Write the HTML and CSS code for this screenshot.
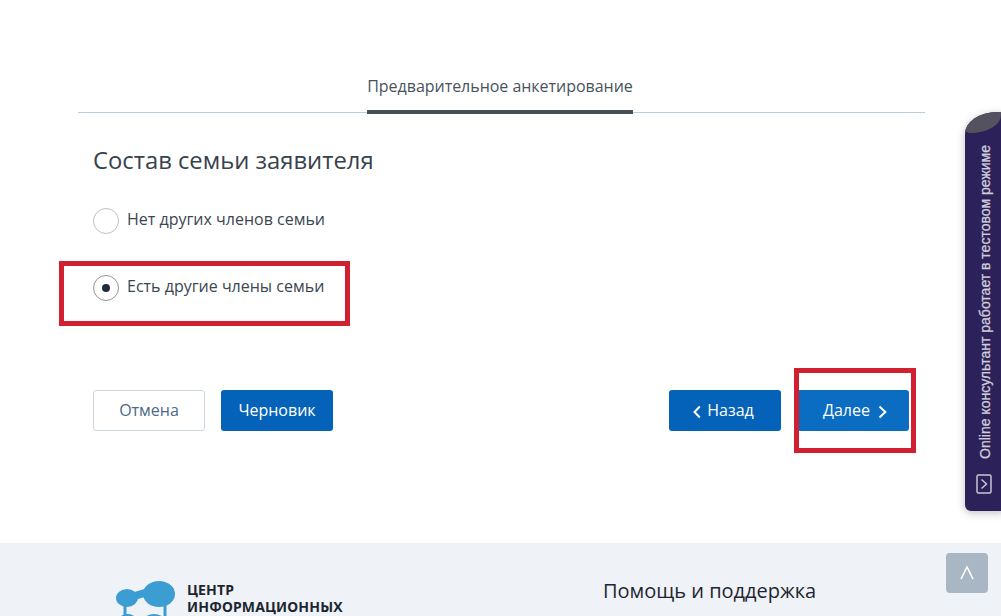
FILE: index.html
```html
<!DOCTYPE html>
<html lang="ru">
<head>
    <meta charset="UTF-8">
    <title>Состав семьи заявителя</title>
    <link rel="stylesheet" href="styles.css">
</head>
<body>
    <main class="content">
        <div class="tabs">
            <div class="tab">Предварительное анкетирование</div>
        </div>

        <div class="form">
            <h2 class="form-title">Состав семьи заявителя</h2>

            <div class="radio-row first">
                <span class="radio"></span>
                <span class="radio-label">Нет других членов семьи</span>
            </div>
            <div class="radio-row second">
                <span class="radio checked"></span>
                <span class="radio-label">Есть другие члены семьи</span>
                <span class="mark mark-radio"></span>
            </div>

            <div class="buttons">
                <div class="btn-group">
                    <div class="btn btn-light">Отмена</div>
                    <div class="btn btn-blue medium">Черновик</div>
                </div>
                <div class="btn-group">
                    <div class="btn btn-blue btn-back">
                        <svg class="chev" width="8" height="14" viewBox="0 0 8 14"><path d="M6.800 1.500 1.500 7l5.300 5.500" fill="none" stroke="#fff" stroke-width="2"/></svg>
                        Назад
                    </div>
                    <div class="btn btn-next">
                        Далее
                        <svg class="chev" width="9" height="14" viewBox="0 0 9 14"><path d="M1.500 1.500 7.300 7l-5.800 5.500" fill="none" stroke="#fff" stroke-width="2"/></svg>
                        <span class="mark mark-next"></span>
                    </div>
                </div>
            </div>
        </div>
    </main>

    <footer class="footer">
        <div class="footer-logo">
            <svg class="logo-icon" width="60" height="37" viewBox="0 0 60 37">
                <path d="M14 16 30 11v5l-16 5M9 26v11M49 26v11" stroke="#3b9dd2" stroke-width="3" fill="#3b9dd2"/>
                <ellipse cx="11" cy="19" rx="11" ry="9" fill="#3b9dd2"/>
                <ellipse cx="43" cy="15" rx="16" ry="13" fill="#3b9dd2"/>
                <ellipse cx="11.500" cy="40" rx="8" ry="5" fill="#3b9dd2"/>
                <ellipse cx="38" cy="41" rx="10" ry="6" fill="#3b9dd2"/>
            </svg>
            <div class="logo-text">ЦЕНТР<br>ИНФОРМАЦИОННЫХ</div>
        </div>
        <div class="footer-help">Помощь и поддержка</div>
    </footer>

    <aside class="consultant">
        <span class="consultant-text">Online консультант работает в тестовом режиме</span>
        <svg class="consultant-icon" width="16" height="20" viewBox="0 0 16 20"><rect x="1" y="1" width="14" height="18" rx="1.500" fill="none" stroke="#c9c6d6" stroke-width="1.500"/><path d="M5.500 5.500 10.500 10l-5 4.500" fill="none" stroke="#c9c6d6" stroke-width="1.500"/></svg>
    </aside>

    <div class="to-top">
        <svg width="14" height="14" viewBox="0 0 14 14"><path d="M1 13 7 1l6 12" fill="none" stroke="#fff" stroke-width="1.600"/></svg>
    </div>
</body>
</html>
```

FILE: styles.css
```css
html, body {
    margin: 0;
    height: 616px;
    overflow: hidden;
    background: #fff;
    font-family: "Open Sans", Arial, sans-serif;
    color: #3c4650;
}

.content {
    padding: 73px 76px 0 78px;
    height: 470px;
}

/* tabs */
.tabs {
    display: flex;
    justify-content: center;
    height: 39px;
    border-bottom: 1px solid #bccbd8;
    padding-right: 3px;
}
.tab {
    height: 37px;
    border-bottom: 4px solid #454f58;
    font-size: 16px;
    line-height: 26px;
    letter-spacing: -0.03px;
    color: #48525b;
}

/* form */
.form {
    padding: 0 16px 0 15px;
}
.form-title {
    margin: 31px 0 0;
    font-size: 23.800px;
    line-height: 32px;
    font-weight: 400;
    color: #37424c;
}
.radio-row {
    display: flex;
    align-items: center;
    position: relative;
    gap: 8px;
    font-size: 16px;
}
.radio-row.first { margin-top: 32px; }
.radio-row.second { margin-top: 41px; }
.radio {
    width: 24px;
    height: 24px;
    border: 1px solid #b9c2c8;
    border-radius: 50%;
    display: flex;
    align-items: center;
    justify-content: center;
    background: #fff;
}
.radio.checked {
    border-color: #8d979e;
}
.radio.checked::after {
    content: "";
    width: 8px;
    height: 8px;
    border-radius: 50%;
    background: #1d2c3c;
}
.radio-label {
    position: relative;
    top: -2px;
    line-height: 26px;
}

/* buttons */
.buttons {
    display: flex;
    justify-content: space-between;
    margin-top: 89px;
}
.btn-group {
    display: flex;
    gap: 16px;
}
.btn {
    width: 112px;
    height: 41px;
    box-sizing: border-box;
    border-radius: 3px;
    padding-bottom: 2px;
    display: flex;
    align-items: center;
    justify-content: center;
    font-size: 16px;
    position: relative;
}
.btn-light {
    background: #fff;
    border: 1px solid #ccd6de;
    color: #4a6a85;
}
.btn-blue {
    background: #0463b9;
    color: #fff;
}
.btn-back {
    gap: 6px;
    padding-right: 3px;
}
.btn-next {
    background: #0a6dc2;
    color: #fff;
    gap: 8px;
    padding-left: 4px;
}
.medium { font-weight: 500; }
.chev { margin-top: 4px; }

/* red annotation frames */
.mark {
    position: absolute;
    box-sizing: border-box;
    border: 5px solid #cf2130;
}
.mark-radio {
    left: -34px;
    top: -14px;
    width: 291px;
    height: 65px;
}
.mark-next {
    left: -3px;
    top: -22px;
    width: 122px;
    height: 85px;
}

/* footer */
.footer {
    height: 73px;
    background: #eff3f8;
    display: flex;
    padding: 36px 0 0 116px;
    box-sizing: border-box;
    overflow: hidden;
}
.footer-logo {
    display: flex;
    width: 487px;
    gap: 11px;
}
.logo-icon {
    flex: none;
    overflow: hidden;
}
.logo-text {
    font-size: 14px;
    font-weight: 700;
    line-height: 17px;
    letter-spacing: 0.150px;
    color: #1d2630;
    font-family: "Noto Sans", Arial, sans-serif;
    margin-top: 2px;
}
.footer-help {
    font-size: 20px;
    line-height: 24px;
    color: #1e2630;
}

/* floating */
.consultant {
    position: absolute;
    left: 965px;
    top: 112px;
    width: 40px;
    height: 399px;
    box-sizing: border-box;
    background: #2c2158;
    border-radius: 32px 0 0 6px / 22px 0 0 6px;
    box-shadow: 0 2px 8px rgba(0, 0, 0, 0.25);
    overflow: hidden;
}
.consultant::before {
    content: "";
    position: absolute;
    left: 0;
    top: 0;
    width: 36px;
    height: 21px;
    background: #55525f;
    border-radius: 0 0 100% 6px;
}
.consultant-text {
    position: absolute;
    left: 12px;
    top: 31px;
    writing-mode: vertical-rl;
    transform: rotate(180deg);
    font-family: "Liberation Sans", Arial, sans-serif;
    font-size: 14px;
    line-height: 16px;
    height: 316px;
    white-space: nowrap;
    color: #cfcddb;
    -webkit-text-stroke: 0.300px #cfcddb;
}
.consultant-icon {
    position: absolute;
    left: 11px;
    top: 362px;
}
.to-top {
    position: absolute;
    left: 946px;
    top: 553px;
    width: 42px;
    height: 40px;
    border-radius: 4px;
    background: #a9b6c4;
    display: flex;
    align-items: center;
    justify-content: center;
}
```
